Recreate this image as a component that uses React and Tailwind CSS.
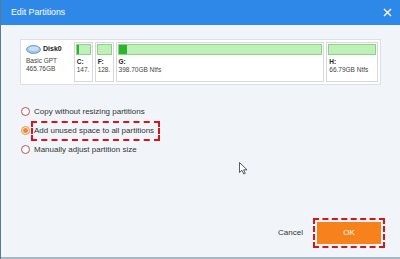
import React from 'react';

const partitions = [
  { id: 'C', label: 'C:', size: '147.', w: 'w-[19px]', used: 'w-[2px]' },
  { id: 'F', label: 'F:', size: '128.', w: 'w-[19px]', used: 'w-0' },
  { id: 'G', label: 'G:', size: '398.70GB Ntfs', w: 'w-[210px]', used: 'w-[8px]' },
  { id: 'H', label: 'H:', size: '66.79GB Ntfs', w: 'w-[52px]', used: 'w-0' },
];

const options = [
  { label: 'Copy without resizing partitions', checked: false },
  { label: 'Add unused space to all partitions', checked: true },
  { label: 'Manually adjust partition size', checked: false },
];

const DiskIcon = () => (
  <svg width="15" height="9" viewBox="0 0 15 9">
    <ellipse cx="7.5" cy="4.5" rx="7" ry="4" fill="#9cc4ec" stroke="#5b8fc9" strokeWidth="0.8" />
    <ellipse cx="7.5" cy="3.8" rx="5" ry="2.2" fill="#c9e0f7" />
  </svg>
);

const Radio = ({ checked }) => (
  <span className={`w-[9px] h-[9px] rounded-full border bg-white flex items-center justify-center shrink-0 ${checked ? 'border-[#f08a3c]' : 'border-[#c0504d]'}`}>
    {checked && <span className="w-[5px] h-[5px] rounded-full bg-[#f5852a]" />}
  </span>
);

export default function App() {
  return (
    <div className="w-[400px] h-[259px] flex flex-col border-l border-[#5d7888] bg-[#f1f5fa] text-[#333] font-['Liberation_Sans',Arial,sans-serif]">
      {/* Title bar */}
      <div className="h-[25px] bg-[#2d88e8] flex items-center justify-between pl-[10px] pr-[8px] text-white">
        <span className="text-[8.8px]">Edit Partitions</span>
        <svg width="9" height="9" viewBox="0 0 9 9" stroke="white" strokeWidth="1.4">
          <path d="M1 1 L8 8 M8 1 L1 8" />
        </svg>
      </div>

      {/* Body */}
      <div className="relative flex-1 flex flex-col border-b-2 border-[#a9b6bf]">
        {/* Disk map */}
        <div className="mt-[14px] ml-[19px] w-[361px] h-[46px] bg-white border border-[#dcdfe3] flex p-[2px] gap-[2px]">
          <div className="w-[49px] flex flex-col pl-[3px] pt-[2px]">
            <div className="flex items-center gap-[2px] h-[10px]">
              <DiskIcon />
              <span className="text-[7px] font-bold text-[#222]">Disk0</span>
            </div>
            <span className="text-[6.5px] leading-[8px] mt-[3px] text-[#444]">Basic GPT</span>
            <span className="text-[6.5px] leading-[8px] text-[#444]">465.76GB</span>
          </div>
          {partitions.map((p) => (
            <div key={p.id} className={`${p.w} border border-[#d6d9dc] flex flex-col p-[1px] overflow-hidden`}>
              <div className="h-[11px] bg-[#bff0b8] border border-[#8fd08a] flex">
                <div className={`${p.used} h-full bg-[#2cb52c]`} />
              </div>
              <span className="text-[6.5px] leading-[8px] font-bold text-[#222] mt-[3px] pl-[1px]">{p.label}</span>
              <span className="text-[6.5px] leading-[8px] text-[#444] pl-[1px] whitespace-nowrap">{p.size}</span>
            </div>
          ))}
        </div>

        {/* Options */}
        <div className="mt-[22px] ml-[20px] flex flex-col gap-[10px] text-[8px] text-[#333]">
          {options.map((o) => (
            <div key={o.label} className="flex items-center gap-[4px] h-[9px]">
              <Radio checked={o.checked} />
              {o.checked ? (
                <span className="-ml-[3px] -my-[6px] border-2 border-dashed border-[#d8141b] pl-[1px] pr-[4px] py-[3px] leading-[10px]">
                  {o.label}
                </span>
              ) : (
                <span>{o.label}</span>
              )}
            </div>
          ))}
        </div>

        {/* Cursor */}
        <svg className="absolute left-[238px] top-[137px]" width="9" height="13" viewBox="0 0 9 13">
          <path d="M0.5 0.5 L0.5 10.5 L3 8.3 L4.8 12 L6.3 11.3 L4.6 7.8 L8 7.8 Z" fill="white" stroke="#333" strokeWidth="0.8" />
        </svg>

        {/* Buttons */}
        <div className="mt-auto mb-[9px] mr-[15px] flex items-center justify-end gap-[10px]">
          <span className="text-[8px] text-[#333]">Cancel</span>
          <div className="border-2 border-dashed border-[#d8141b] p-[2px]">
            <div className="w-[64px] h-[22px] bg-[#f7821c] flex items-center justify-center text-[8px] text-white">OK</div>
          </div>
        </div>
      </div>
    </div>
  );
}
